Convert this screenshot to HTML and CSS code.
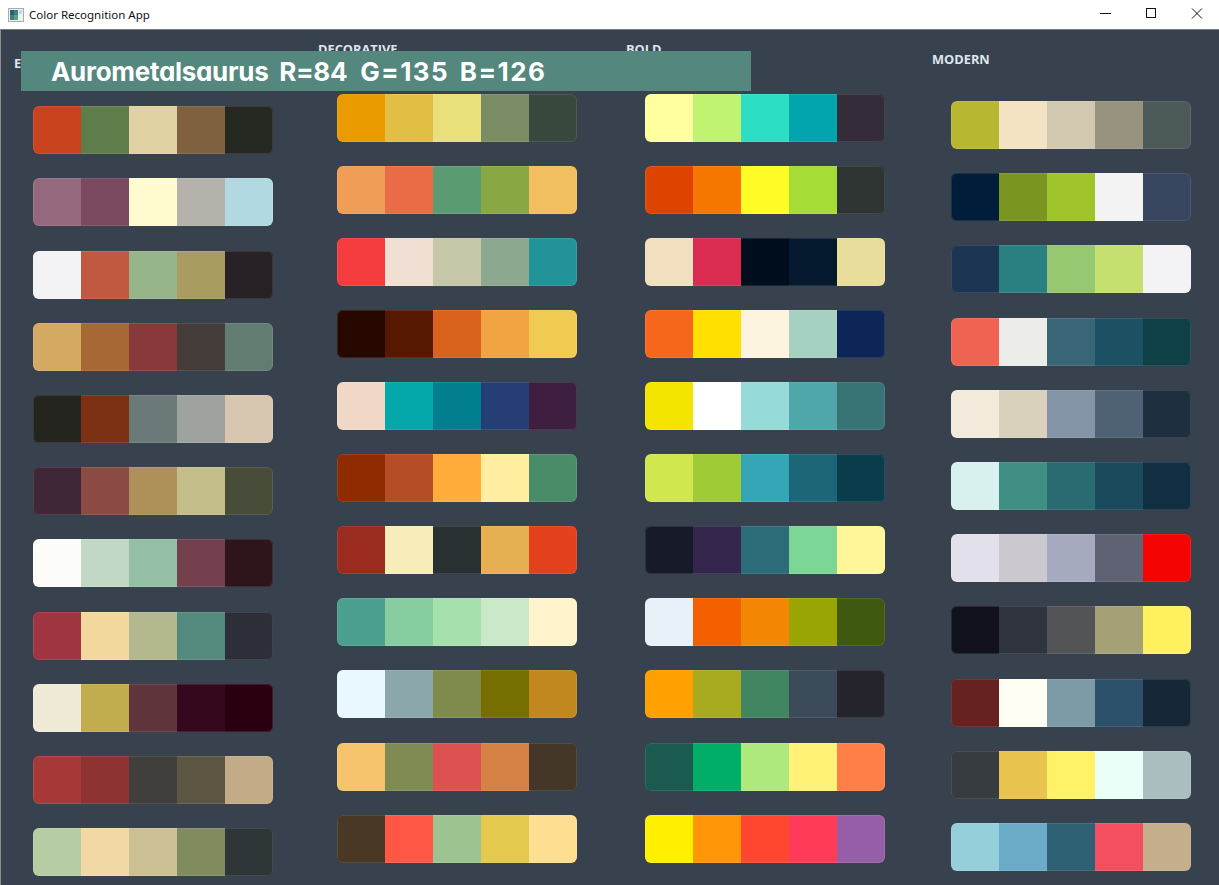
FILE: index.html
```html
<!DOCTYPE html>
<html lang="en">
<head>
<meta charset="utf-8">
<title>Color Recognition App</title>
<link rel="stylesheet" href="styles.css">
</head>
<body>
<div class="window">
<header class="titlebar">
<svg class="app-icon" width="16" height="14" viewBox="0 0 16 14"><rect x=".5" y=".5" width="15" height="13" fill="#eef1f2" stroke="#a9adb0"/><rect x="2" y="2" width="8" height="10" fill="#3f7f86"/><rect x="2" y="2" width="4" height="5" fill="#2f5f72"/><rect x="6" y="7" width="4" height="5" fill="#5fa07f"/><rect x="11" y="2" width="3" height="4" fill="#c9d6dc"/></svg>
<span class="title">Color Recognition App</span>
<div class="controls">
<svg class="ctl" width="46" height="29" viewBox="0 0 46 29"><path d="M19 13.5h11" stroke="#111" fill="none"/></svg>
<svg class="ctl" width="46" height="29" viewBox="0 0 46 29"><rect x="19.5" y="8.5" width="9" height="9" stroke="#111" fill="none"/></svg>
<svg class="ctl" width="46" height="29" viewBox="0 0 46 29"><path d="M19 8.5l10 10M29 8.5l-10 10" stroke="#111" fill="none"/></svg>
</div>
</header>
<main class="canvas">
<section class="col col-earthy">
<h2 class="heading">EARTHY</h2>
<div class="list">
<div class="palette"><i style="background:#c9431f"></i><i style="background:#5f7d4b"></i><i style="background:#e0d2a3"></i><i style="background:#7f6140"></i><i style="background:#262822"></i></div>
<div class="palette"><i style="background:#95697d"></i><i style="background:#7a495f"></i><i style="background:#fffbcf"></i><i style="background:#b4b2aa"></i><i style="background:#b2d9e2"></i></div>
<div class="palette"><i style="background:#f3f3f5"></i><i style="background:#bf5a40"></i><i style="background:#96b68a"></i><i style="background:#a89c60"></i><i style="background:#282126"></i></div>
<div class="palette"><i style="background:#d4aa63"></i><i style="background:#a86836"></i><i style="background:#8a393b"></i><i style="background:#443d3a"></i><i style="background:#637c72"></i></div>
<div class="palette"><i style="background:#23251e"></i><i style="background:#7c3014"></i><i style="background:#6b7a78"></i><i style="background:#9ea39d"></i><i style="background:#d6c5af"></i></div>
<div class="palette"><i style="background:#402738"></i><i style="background:#8b4a44"></i><i style="background:#ae9059"></i><i style="background:#c3bd88"></i><i style="background:#484d39"></i></div>
<div class="palette"><i style="background:#fcfcf8"></i><i style="background:#c2d8c5"></i><i style="background:#95bfa5"></i><i style="background:#74404e"></i><i style="background:#2e151c"></i></div>
<div class="palette"><i style="background:#9f3540"></i><i style="background:#f2d89c"></i><i style="background:#b3b88f"></i><i style="background:#548a7e"></i><i style="background:#2c2e38"></i></div>
<div class="palette"><i style="background:#efead6"></i><i style="background:#c1ac4e"></i><i style="background:#5f343b"></i><i style="background:#35081e"></i><i style="background:#2a0010"></i></div>
<div class="palette"><i style="background:#a73838"></i><i style="background:#8e3232"></i><i style="background:#403f3c"></i><i style="background:#5c5542"></i><i style="background:#c2ab86"></i></div>
<div class="palette"><i style="background:#b6cca3"></i><i style="background:#f0d9a4"></i><i style="background:#cbc194"></i><i style="background:#808b5f"></i><i style="background:#2f3637"></i></div>
</div>
</section>
<section class="col col-decorative">
<h2 class="heading">DECORATIVE</h2>
<div class="list">
<div class="palette"><i style="background:#ea9b00"></i><i style="background:#e1bf45"></i><i style="background:#e9df7b"></i><i style="background:#7a8c63"></i><i style="background:#39483d"></i></div>
<div class="palette"><i style="background:#f09d58"></i><i style="background:#e96c47"></i><i style="background:#5b9b73"></i><i style="background:#89a843"></i><i style="background:#f1bf5f"></i></div>
<div class="palette"><i style="background:#f43b3e"></i><i style="background:#f0dfd3"></i><i style="background:#c6c6a9"></i><i style="background:#8ca88f"></i><i style="background:#229499"></i></div>
<div class="palette"><i style="background:#270800"></i><i style="background:#571800"></i><i style="background:#d9631c"></i><i style="background:#f1a441"></i><i style="background:#f1ca52"></i></div>
<div class="palette"><i style="background:#f1d7c5"></i><i style="background:#05a8aa"></i><i style="background:#027f8f"></i><i style="background:#253f74"></i><i style="background:#3e1f41"></i></div>
<div class="palette"><i style="background:#8f2b00"></i><i style="background:#b54d27"></i><i style="background:#ffac3b"></i><i style="background:#ffeea0"></i><i style="background:#4a8c68"></i></div>
<div class="palette"><i style="background:#9b2a1f"></i><i style="background:#f7edbb"></i><i style="background:#2a3133"></i><i style="background:#e5af52"></i><i style="background:#e2411b"></i></div>
<div class="palette"><i style="background:#4b9f8e"></i><i style="background:#88cda0"></i><i style="background:#a6e0ad"></i><i style="background:#cbe9c9"></i><i style="background:#fff4cc"></i></div>
<div class="palette"><i style="background:#e9f8ff"></i><i style="background:#8ba7ac"></i><i style="background:#7f8b4d"></i><i style="background:#766f00"></i><i style="background:#c1881f"></i></div>
<div class="palette"><i style="background:#f4c36b"></i><i style="background:#808b53"></i><i style="background:#dd5250"></i><i style="background:#d68146"></i><i style="background:#443729"></i></div>
<div class="palette"><i style="background:#483824"></i><i style="background:#ff5745"></i><i style="background:#9dc391"></i><i style="background:#e5c94e"></i><i style="background:#fede91"></i></div>
</div>
</section>
<section class="col col-bold">
<h2 class="heading">BOLD</h2>
<div class="list">
<div class="palette"><i style="background:#ffff9f"></i><i style="background:#bff370"></i><i style="background:#2cdec3"></i><i style="background:#02a4ad"></i><i style="background:#342c38"></i></div>
<div class="palette"><i style="background:#de4300"></i><i style="background:#f67700"></i><i style="background:#fffb24"></i><i style="background:#a5dc36"></i><i style="background:#2d3431"></i></div>
<div class="palette"><i style="background:#f1dfbf"></i><i style="background:#da2c50"></i><i style="background:#000d1d"></i><i style="background:#051a2f"></i><i style="background:#e8dd9a"></i></div>
<div class="palette"><i style="background:#f6671b"></i><i style="background:#ffe000"></i><i style="background:#fdf4df"></i><i style="background:#a6d0c2"></i><i style="background:#0d2557"></i></div>
<div class="palette"><i style="background:#f4e500"></i><i style="background:#ffffff"></i><i style="background:#96dbd9"></i><i style="background:#50a7a9"></i><i style="background:#387476"></i></div>
<div class="palette"><i style="background:#d2e64e"></i><i style="background:#9ecb36"></i><i style="background:#35a6b5"></i><i style="background:#1c6677"></i><i style="background:#0a3c4c"></i></div>
<div class="palette"><i style="background:#171b29"></i><i style="background:#35264e"></i><i style="background:#2b6c78"></i><i style="background:#7cd696"></i><i style="background:#fff699"></i></div>
<div class="palette"><i style="background:#e8f1fa"></i><i style="background:#f46000"></i><i style="background:#f38703"></i><i style="background:#98a503"></i><i style="background:#3f5a10"></i></div>
<div class="palette"><i style="background:#ffa000"></i><i style="background:#a8aa20"></i><i style="background:#428561"></i><i style="background:#3b4b5a"></i><i style="background:#25242c"></i></div>
<div class="palette"><i style="background:#1a5a50"></i><i style="background:#00ae68"></i><i style="background:#afe87c"></i><i style="background:#fff277"></i><i style="background:#ff7f47"></i></div>
<div class="palette"><i style="background:#fff000"></i><i style="background:#ff9507"></i><i style="background:#ff4631"></i><i style="background:#ff3b58"></i><i style="background:#975ea8"></i></div>
</div>
</section>
<section class="col col-modern">
<h2 class="heading">MODERN</h2>
<div class="list">
<div class="palette"><i style="background:#b8b732"></i><i style="background:#f3e3c2"></i><i style="background:#d2c8af"></i><i style="background:#98937f"></i><i style="background:#4b5958"></i></div>
<div class="palette"><i style="background:#001d3a"></i><i style="background:#7a9620"></i><i style="background:#a0c42b"></i><i style="background:#f3f3f3"></i><i style="background:#39465f"></i></div>
<div class="palette"><i style="background:#1c3553"></i><i style="background:#2a8080"></i><i style="background:#95c871"></i><i style="background:#c6e070"></i><i style="background:#f3f3f5"></i></div>
<div class="palette"><i style="background:#ee6351"></i><i style="background:#ecece9"></i><i style="background:#396676"></i><i style="background:#1b5162"></i><i style="background:#0f3f47"></i></div>
<div class="palette"><i style="background:#f3eadc"></i><i style="background:#d9d1bc"></i><i style="background:#8395a7"></i><i style="background:#4f6174"></i><i style="background:#1e2f40"></i></div>
<div class="palette"><i style="background:#d8f1ef"></i><i style="background:#3f8f84"></i><i style="background:#2a6b72"></i><i style="background:#1b4a5c"></i><i style="background:#112f42"></i></div>
<div class="palette"><i style="background:#e2e0ea"></i><i style="background:#ccc8cf"></i><i style="background:#a6aabf"></i><i style="background:#5f6272"></i><i style="background:#f40503"></i></div>
<div class="palette"><i style="background:#12121f"></i><i style="background:#2f343f"></i><i style="background:#535456"></i><i style="background:#a5a177"></i><i style="background:#fff05d"></i></div>
<div class="palette"><i style="background:#672120"></i><i style="background:#fffef2"></i><i style="background:#7d9ba6"></i><i style="background:#2d506b"></i><i style="background:#162838"></i></div>
<div class="palette"><i style="background:#363c3f"></i><i style="background:#e8c44f"></i><i style="background:#fff266"></i><i style="background:#eafff8"></i><i style="background:#aabdbf"></i></div>
<div class="palette"><i style="background:#95cfda"></i><i style="background:#6babc8"></i><i style="background:#2f6175"></i><i style="background:#f34f60"></i><i style="background:#c4ae8c"></i></div>
</div>
</section>
</main>
<div class="banner">Aurometalsaurus R=84 <span class="banner-tail">G=135 B=126</span></div>
</div>
</body>
</html>
```

FILE: styles.css
```css
* {
  box-sizing: border-box;
}

html,
body {
  margin: 0;
  height: 100%;
  overflow: hidden;
  background: #37424e;
}

.window {
  position: relative;
  display: flex;
  flex-direction: column;
  height: 885px;
}

.titlebar {
  display: flex;
  align-items: center;
  height: 29px;
  flex: none;
  background: #ffffff;
  padding-left: 8px;
  font-family: "Noto Sans", "Open Sans", sans-serif;
  font-size: 11.5px;
  color: #111111;
}

.app-icon {
  flex: none;
  margin-right: 5px;
}

.controls {
  display: flex;
  margin-left: auto;
}

.ctl {
  display: block;
}

.canvas {
  flex: 1;
  display: grid;
  grid-template-columns: 304px 308px 306px 1fr;
  padding-left: 14px;
  border-top: 1px solid #77797b;
  border-left: 1px solid #8a8c8e;
  background: #37424e;
  overflow: hidden;
}

.col {
  min-width: 0;
  margin-left: -1px;
}

.col-earthy {
  padding-top: 25px;
}

.col-decorative,
.col-bold {
  padding-top: 11px;
}

.col-modern {
  padding-top: 21px;
}

.heading {
  margin: 0;
  font-family: "Open Sans", "Noto Sans", sans-serif;
  font-size: 12.8px;
  font-weight: 700;
  line-height: 16px;
  color: #dfe5ee;
}

.list {
  display: flex;
  flex-direction: column;
  gap: 24.2px;
  margin-left: 19px;
}

.col-earthy .list {
  margin-top: 35.2px;
}

.col-decorative .list,
.col-bold .list {
  gap: 24.1px;
  margin-top: 36.7px;
}

.col-modern .list {
  margin-top: 34px;
}

.palette {
  position: relative;
  display: flex;
  flex: none;
  width: 240px;
  height: 48px;
  border-radius: 6px;
  overflow: hidden;
}

.palette::after {
  content: "";
  position: absolute;
  inset: 0;
  border: 1px solid rgba(255, 255, 255, 0.1);
  border-radius: 6px;
}

.palette i {
  display: block;
  flex: 1;
}

.banner {
  position: absolute;
  left: 21px;
  top: 51px;
  width: 730px;
  height: 40px;
  padding-left: 30px;
  background: #54877e;
  color: #ffffff;
  font-family: "Inter", "Noto Sans", sans-serif;
  font-feature-settings: "cv11" 1;
  font-size: 26px;
  font-weight: 700;
  line-height: 42px;
  letter-spacing: -0.3px;
  word-spacing: 5px;
  white-space: nowrap;
}

.banner-tail {
  margin-left: 2px;
  letter-spacing: 1.45px;
  word-spacing: 3px;
}
```
